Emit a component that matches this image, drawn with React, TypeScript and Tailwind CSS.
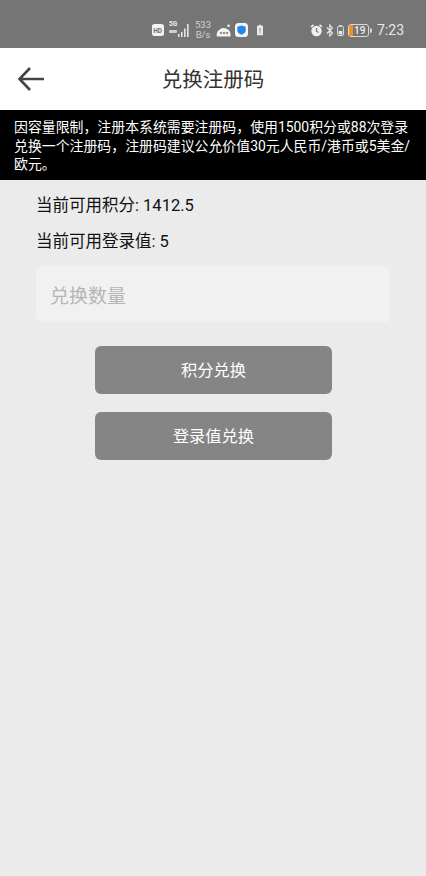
const font = { fontFamily: '"Roboto", "Noto Sans CJK SC", sans-serif' };

function StatusLeft() {
  return (
    <div className="flex items-center">
      <svg width="12" height="12" viewBox="0 0 12 12" className="mr-[5px]">
        <rect width="12" height="12" rx="2.500" fill="#f2f2f2" />
        <text x="1.200" y="8.500" fontSize="6.500" fontWeight="700" fill="#6f6f6f" fontFamily="Roboto">HD</text>
      </svg>
      <div className="relative w-[20px] h-[14px] mr-[6px]">
        <span className="absolute left-0 top-[-2px] text-[6.500px] leading-[7px] font-bold text-[#eeeeee]">5G</span>
        <span className="absolute left-0 top-[7px] w-[8px] h-[3px] bg-[#cfcfcf] rounded-[1px]" />
        <svg width="11" height="13" viewBox="0 0 11 13" className="absolute left-[9px] top-[1px]">
          <path d="M0 10h1.600v3H0zM3 8h1.600v5H3zM6 4.500h1.600V13H6zM9 0h1.600v13H9z" fill="#e4e4e4" />
        </svg>
      </div>
      <div className="flex flex-col items-center w-[16px] mr-[5px] text-[9.500px] leading-[10px] text-[#d0d0d0]">
        <span>533</span>
        <span>B/s</span>
      </div>
      <svg width="16" height="13" viewBox="0 0 16 13" className="mr-[3px]">
        <path d="M1 12.500c-1-3 .5-6 3-7 1.500-1.600 5-2 7-.5 2.500.9 4.200 4.200 3.500 7.500z" fill="#f1f1f1" />
        <circle cx="5" cy="9" r="1.100" fill="#757575" />
        <circle cx="8" cy="9" r="1.100" fill="#757575" />
        <circle cx="11" cy="9" r="1.100" fill="#757575" />
        <circle cx="12.500" cy="1.800" r="1.300" fill="#f1f1f1" />
      </svg>
      <svg width="13" height="14" viewBox="0 0 13 14" className="mr-[9px]">
        <rect width="13" height="14" rx="3.500" fill="#f5f5f5" />
        <path d="M6.500 2.500l4.200 1.300v3.400c0 2.200-1.800 3.600-4.200 4.500-2.400-.9-4.200-2.300-4.200-4.500V3.800z" fill="#2189e8" />
      </svg>
      <svg width="6" height="12" viewBox="0 0 7 12">
        <path d="M2.300 0h2.400v1H7v11H0V1h2.300z" fill="#ececec" />
        <path d="M3 3.500h1v4.500H3zM3 9h1v1.200H3z" fill="#6f6f6f" />
      </svg>
    </div>
  );
}

function StatusRight() {
  return (
    <div className="flex items-center">
      <svg width="13" height="13" viewBox="0 0 13 13" className="mr-[3px]">
        <circle cx="6.500" cy="7" r="5.200" fill="#f2f2f2" />
        <path d="M1 3l2.500-2.200M12 3L9.500.8" stroke="#f2f2f2" strokeWidth="1.600" />
        <path d="M6.500 4v3.200l2 1.200" stroke="#757575" strokeWidth="1.200" fill="none" />
      </svg>
      <svg width="8" height="13" viewBox="0 0 8 13" className="mr-[3px]">
        <path d="M1 3.500l5.500 5.500-2.700 3V1l2.700 3L1 9.500" stroke="#ececec" strokeWidth="1.100" fill="none" />
      </svg>
      <svg width="7" height="13" viewBox="0 0 8 13" className="mr-[4px]">
        <rect x="0.700" y="1.700" width="6.600" height="10.600" rx="1.200" stroke="#e8e8e8" strokeWidth="1.100" fill="none" />
        <rect x="2.300" y="0.500" width="3.400" height="1.200" fill="#e8e8e8" />
        <rect x="2" y="7" width="4" height="4" fill="#e8e8e8" />
      </svg>
      <div className="relative w-[21px] h-[13px] rounded-[3px] border border-[#d9d9d9] flex items-center overflow-hidden">
        <div className="w-[4px] h-full bg-[#f2931d]" />
        <span className="absolute left-[5px] top-[-1px] text-[10px] leading-[13px] font-medium text-[#f0f0f0]">19</span>
      </div>
      <div className="w-[2px] h-[5px] bg-[#d9d9d9] ml-[1px] mr-[5px] rounded-r-sm" />
      <span className="text-[14px] leading-none text-[#e8e8e8]">7:23</span>
    </div>
  );
}

export default function App() {
  return (
    <div style={font} className="w-[426px] h-[876px] bg-[#ebebeb] flex flex-col overflow-hidden">
      <div className="h-[48px] bg-[#757575] flex items-center justify-between pl-[152px] pr-[22px] pt-[12px] shrink-0">
        <StatusLeft />
        <StatusRight />
      </div>
      <div className="h-[62px] bg-white relative flex items-center justify-center shrink-0">
        <svg width="28" height="26" viewBox="0 0 28 26" className="absolute left-[17px] top-[18px]">
          <path d="M27 13H2.500M13 2L2.500 13 13 24" stroke="#444444" strokeWidth="2.600" fill="none" />
        </svg>
        <span className="text-[20.500px] leading-none text-[#333333] mt-[2px]">兑换注册码</span>
      </div>
      <div className="h-[70px] bg-black text-white text-[13.900px] leading-[18.500px] pl-[14px] pt-[8px] shrink-0">
        <div>因容量限制，注册本系统需要注册码，使用1500积分或88次登录</div>
        <div>兑换一个注册码，注册码建议公允价值30元人民币/港币或5美金/</div>
        <div>欧元。</div>
      </div>
      <div className="flex flex-col px-[36px]">
        <div className="text-[16.500px] leading-[20px] text-[#111111] mt-[16px]">当前可用积分: 1412.5</div>
        <div className="text-[16.500px] leading-[20px] text-[#111111] mt-[16px]">当前可用登录值: 5</div>
        <div className="h-[56px] mt-[14px] rounded-[6px] bg-[#f1f1f1] flex items-center pl-[14px] pt-[6px] text-[19px] text-[#b5b5b5]">
          兑换数量
        </div>
      </div>
      <div className="flex flex-col items-center gap-[18.500px] mt-[24px] ml-[1px]">
        <button className="w-[237px] h-[47.500px] rounded-[6px] bg-[#858585] text-white text-[16.250px] pt-[2px]">积分兑换</button>
        <button className="w-[237px] h-[47.500px] rounded-[6px] bg-[#858585] text-white text-[16.250px] pt-[2px]">登录值兑换</button>
      </div>
    </div>
  );
}
